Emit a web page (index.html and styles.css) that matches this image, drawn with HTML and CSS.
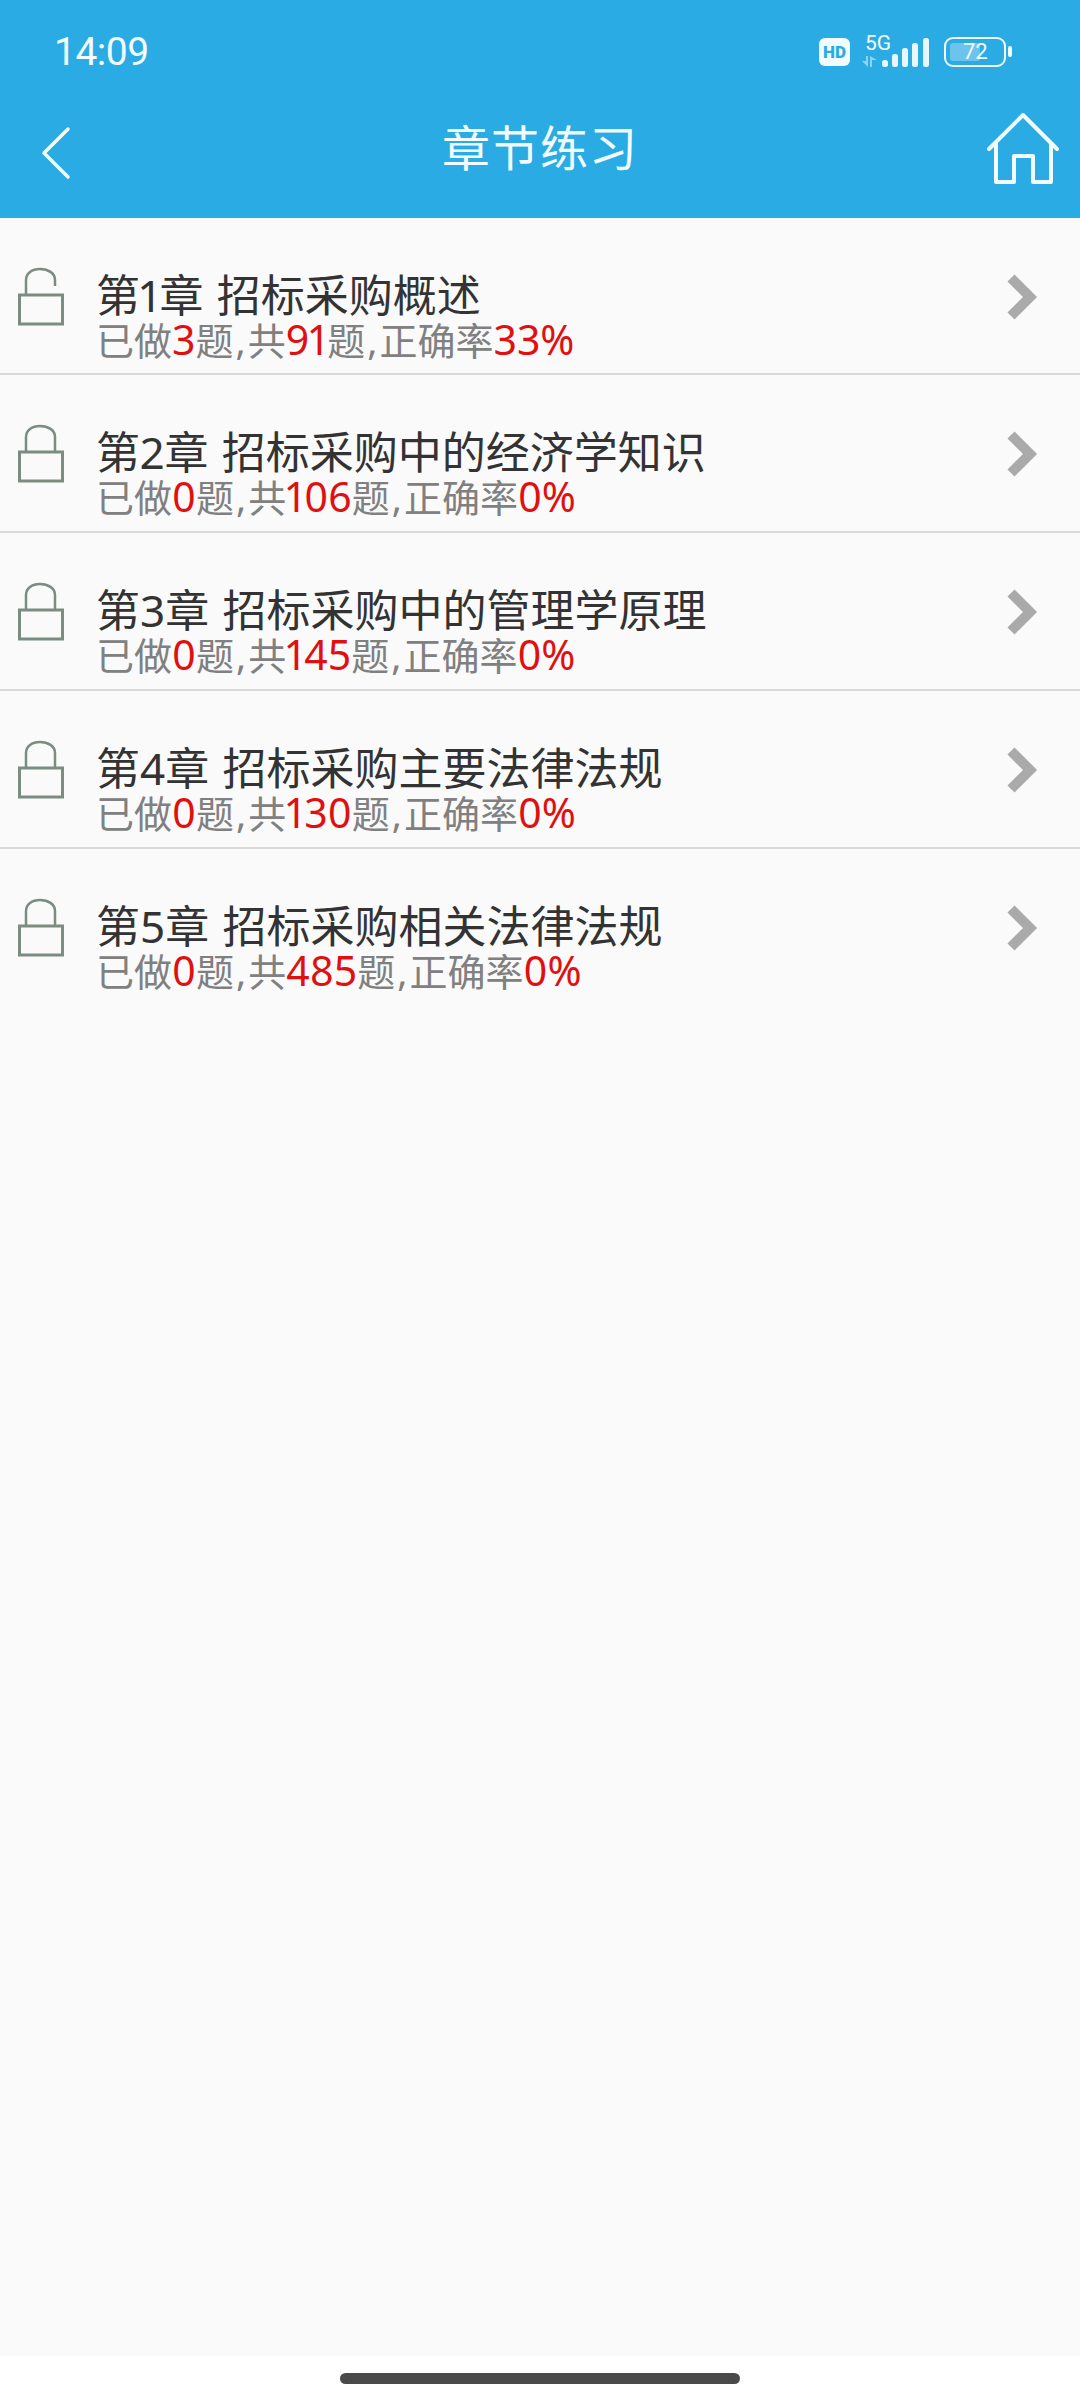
FILE: index.html
```html
<!DOCTYPE html>
<html lang="zh-CN">
<head>
    <meta charset="UTF-8">
    <meta name="viewport" content="width=device-width, initial-scale=1.0">
    <link rel="stylesheet" href="styles.css">
    <title>章节练习</title>
</head>
<body>

<header class="top">
    <div class="status-bar">
        <span class="status-time">14:09</span>
        <div class="status-icons">
            <span class="hd-badge">HD</span>
            <svg class="net-icon" width="70" height="36" viewBox="0 0 70 36">
                <text x="5" y="15" class="net-label">5G</text>
                <path d="M8 21v11L2 26h4v-5zM10 21v11h2v-7h5z" fill="#8fd2f1"/>
                <rect x="22" y="25" width="6" height="7" rx="2.5" fill="#e8f7fe"/>
                <rect x="32" y="19" width="6" height="13" rx="2.5" fill="#e8f7fe"/>
                <rect x="42" y="13" width="6" height="19" rx="2.5" fill="#e8f7fe"/>
                <rect x="52" y="8" width="6" height="24" rx="2.5" fill="#e8f7fe"/>
                <rect x="63" y="3" width="6" height="29" rx="2.5" fill="#e8f7fe"/>
            </svg>
            <div class="battery">
                <div class="battery-fill"></div>
                <span class="battery-num">72</span>
            </div>
            <div class="battery-nub"></div>
        </div>
    </div>
    <nav class="nav-bar">
        <svg class="back-icon" width="32" height="54" viewBox="0 0 32 54">
            <path d="M28 3L4 27L28 51" fill="none" stroke="#f2fbff" stroke-width="3.5" stroke-linecap="round" stroke-linejoin="round"/>
        </svg>
        <h1 class="nav-title">章节练习</h1>
        <svg class="home-icon" width="72" height="72" viewBox="0 0 72 72">
            <path d="M2 37L36 3L70 37M9 31V70H27V44H46V70H64V31" fill="none" stroke="#f2fbff" stroke-width="4" stroke-linecap="round" stroke-linejoin="round"/>
        </svg>
    </nav>
</header>

<main class="chapter-list">
    <a class="chapter chapter-first">
        <svg class="lock-icon" width="46" height="59" viewBox="0 0 46 59">
            <path d="M8 27V13C8 6 14 2 22 2C30 2 37 6 37 13V19" fill="none" stroke="#7b8c80" stroke-width="2.5"/>
            <rect x="1.5" y="28" width="43" height="29" fill="none" stroke="#7b8c80" stroke-width="3"/>
        </svg>
        <div class="chapter-text">
            <div class="chapter-name">第1章 招标采购概述</div>
            <div class="chapter-stat">已做<b>3</b>题<span class="sep">,</span>共<b>91</b>题<span class="sep">,</span>正确率<b>33%</b></div>
        </div>
        <svg class="arrow-icon" width="32" height="46" viewBox="0 0 32 46">
            <path d="M5 4L24 23L5 42" fill="none" stroke="#aaaaaa" stroke-width="10"/>
        </svg>
    </a>
    <a class="chapter">
        <svg class="lock-icon" width="46" height="59" viewBox="0 0 46 59">
            <path d="M8 27V13C8 6 14 2 22 2C30 2 37 6 37 13V27" fill="none" stroke="#7b8c80" stroke-width="2.5"/>
            <rect x="1.5" y="28" width="43" height="29" fill="none" stroke="#7b8c80" stroke-width="3"/>
        </svg>
        <div class="chapter-text">
            <div class="chapter-name">第2章 招标采购中的经济学知识</div>
            <div class="chapter-stat">已做<b>0</b>题<span class="sep">,</span>共<b>106</b>题<span class="sep">,</span>正确率<b>0%</b></div>
        </div>
        <svg class="arrow-icon" width="32" height="46" viewBox="0 0 32 46">
            <path d="M5 4L24 23L5 42" fill="none" stroke="#aaaaaa" stroke-width="10"/>
        </svg>
    </a>
    <a class="chapter">
        <svg class="lock-icon" width="46" height="59" viewBox="0 0 46 59">
            <path d="M8 27V13C8 6 14 2 22 2C30 2 37 6 37 13V27" fill="none" stroke="#7b8c80" stroke-width="2.5"/>
            <rect x="1.5" y="28" width="43" height="29" fill="none" stroke="#7b8c80" stroke-width="3"/>
        </svg>
        <div class="chapter-text">
            <div class="chapter-name">第3章 招标采购中的管理学原理</div>
            <div class="chapter-stat">已做<b>0</b>题<span class="sep">,</span>共<b>145</b>题<span class="sep">,</span>正确率<b>0%</b></div>
        </div>
        <svg class="arrow-icon" width="32" height="46" viewBox="0 0 32 46">
            <path d="M5 4L24 23L5 42" fill="none" stroke="#aaaaaa" stroke-width="10"/>
        </svg>
    </a>
    <a class="chapter">
        <svg class="lock-icon" width="46" height="59" viewBox="0 0 46 59">
            <path d="M8 27V13C8 6 14 2 22 2C30 2 37 6 37 13V27" fill="none" stroke="#7b8c80" stroke-width="2.5"/>
            <rect x="1.5" y="28" width="43" height="29" fill="none" stroke="#7b8c80" stroke-width="3"/>
        </svg>
        <div class="chapter-text">
            <div class="chapter-name">第4章 招标采购主要法律法规</div>
            <div class="chapter-stat">已做<b>0</b>题<span class="sep">,</span>共<b>130</b>题<span class="sep">,</span>正确率<b>0%</b></div>
        </div>
        <svg class="arrow-icon" width="32" height="46" viewBox="0 0 32 46">
            <path d="M5 4L24 23L5 42" fill="none" stroke="#aaaaaa" stroke-width="10"/>
        </svg>
    </a>
    <a class="chapter chapter-last">
        <svg class="lock-icon" width="46" height="59" viewBox="0 0 46 59">
            <path d="M8 27V13C8 6 14 2 22 2C30 2 37 6 37 13V27" fill="none" stroke="#7b8c80" stroke-width="2.5"/>
            <rect x="1.5" y="28" width="43" height="29" fill="none" stroke="#7b8c80" stroke-width="3"/>
        </svg>
        <div class="chapter-text">
            <div class="chapter-name">第5章 招标采购相关法律法规</div>
            <div class="chapter-stat">已做<b>0</b>题<span class="sep">,</span>共<b>485</b>题<span class="sep">,</span>正确率<b>0%</b></div>
        </div>
        <svg class="arrow-icon" width="32" height="46" viewBox="0 0 32 46">
            <path d="M5 4L24 23L5 42" fill="none" stroke="#aaaaaa" stroke-width="10"/>
        </svg>
    </a>
</main>

<footer class="gesture-area">
    <div class="gesture-bar"></div>
</footer>

</body>
</html>
```

FILE: styles.css
```css
* {
    box-sizing: border-box;
}

body {
    margin: 0;
    width: 1080px;
    height: 2400px;
    display: flex;
    flex-direction: column;
    font-family: "Noto Sans", "Noto Sans CJK SC", sans-serif;
    background-color: #fff;
}

.top {
    height: 218px;
    background-color: #2babe3;
    color: #f2fbff;
}

.status-bar {
    height: 98px;
    padding: 28px 68px 0 54px;
    display: flex;
    justify-content: space-between;
    align-items: flex-start;
}

.status-time {
    font-family: Roboto, sans-serif;
    font-size: 39px;
    line-height: 48px;
    letter-spacing: -0.5px;
}

.status-icons {
    display: flex;
    align-items: flex-start;
    margin-top: 7px;
}

.hd-badge {
    width: 31px;
    height: 28px;
    margin-top: 3px;
    border-radius: 6px;
    background-color: #f2fbff;
    color: #2babe3;
    font-family: Roboto, sans-serif;
    font-size: 17px;
    font-weight: 900;
    line-height: 28px;
    text-align: center;
}

.net-icon {
    margin-left: 10px;
}

.net-label {
    font-family: Roboto, sans-serif;
    font-size: 21px;
    fill: #f2fbff;
}

.battery {
    width: 62px;
    height: 30px;
    margin-left: 14px;
    margin-top: 2px;
    padding: 4px;
    border: 2.5px solid #f2fbff;
    border-radius: 9px;
    position: relative;
}

.battery-fill {
    width: 30px;
    height: 100%;
    background-color: #6cc3ec;
    border-radius: 3px;
}

.battery-num {
    position: absolute;
    left: 17px;
    top: 0;
    font-family: Roboto, sans-serif;
    font-size: 22px;
    line-height: 25px;
}

.battery-nub {
    width: 4px;
    height: 11px;
    margin: 11px 0 0 2px;
    background-color: #f2fbff;
    border-radius: 2px;
}

.nav-bar {
    height: 120px;
    padding: 0 21px 0 40px;
    display: flex;
    align-items: center;
    justify-content: space-between;
    position: relative;
}

.back-icon {
    margin-bottom: 11px;
}

.nav-title {
    position: absolute;
    left: 0;
    right: 0;
    top: 0;
    margin: 0;
    font-size: 48px;
    font-weight: 400;
    line-height: 100px;
    text-align: center;
    letter-spacing: 1px;
}

.home-icon {
    margin-bottom: 20px;
}

.chapter-list {
    flex: 1;
    background-color: #fafafa;
}

.chapter {
    height: 158px;
    padding: 48px 42px 0 18px;
    display: flex;
    align-items: flex-start;
    border-bottom: 2px solid #d9d9d9;
}

.chapter-first {
    height: 157px;
}

.chapter-last {
    border-bottom: none;
}

.lock-icon {
    flex-shrink: 0;
    margin-top: 1px;
}

.chapter-text {
    flex: 1;
    margin: 6px 0 0 32px;
    font-feature-settings: "pnum";
}

.chapter-name {
    font-size: 44px;
    line-height: 47px;
    color: #333;
    word-spacing: 2px;
}

.chapter-stat {
    font-size: 38px;
    line-height: 40px;
    color: #808080;
}

.chapter-stat b {
    font-size: 41px;
    line-height: 40px;
    font-weight: 400;
    color: #e01010;
}

.sep {
    margin: 0 2px;
}

.arrow-icon {
    margin-top: 8px;
}

.gesture-area {
    height: 44px;
    padding-top: 17px;
    display: flex;
    justify-content: center;
}

.gesture-bar {
    width: 400px;
    height: 11px;
    background-color: #4a4a4a;
    border-radius: 6px;
}
```
